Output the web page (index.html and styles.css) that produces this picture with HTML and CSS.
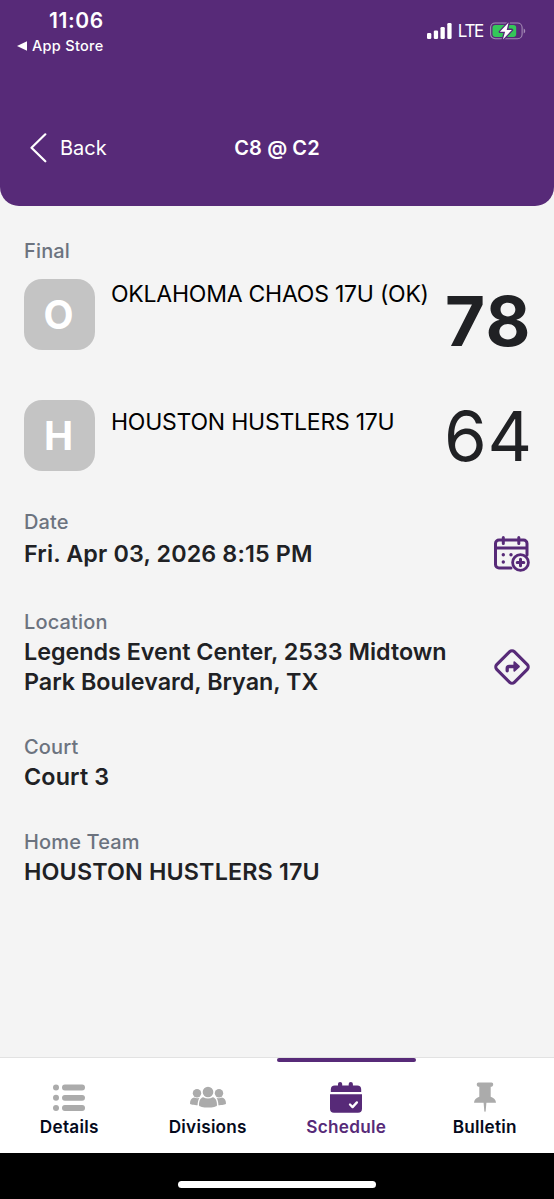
FILE: index.html
```html
<!DOCTYPE html>
<html lang="en">
<head>
<meta charset="utf-8">
<title>C8 @ C2</title>
<link rel="stylesheet" href="styles.css">
</head>
<body>
<header class="header">
  <div class="status">
    <div class="status-left">
      <div class="time">11:06</div>
      <div class="return-app">
        <svg width="10" height="10" viewBox="0 0 10 10"><path d="M0 5 10 .2V9.800Z" fill="#fff"/></svg>
        <span>App Store</span>
      </div>
    </div>
    <div class="status-right">
      <svg width="25" height="16" viewBox="0 0 25 16" fill="#fff"><rect x="0" y="10" width="4.300" height="6" rx="1.300"/><rect x="6.800" y="7.500" width="4.300" height="8.500" rx="1.300"/><rect x="13.500" y="4" width="4.300" height="12" rx="1.300"/><rect x="20.300" y="0" width="4.300" height="16" rx="1.300"/></svg>
      <span class="network">LTE</span>
      <svg class="battery" width="36" height="18" viewBox="0 0 36 18">
        <rect x=".6" y="1" width="31.500" height="15.800" rx="4.500" fill="none" stroke="#a58cb5" stroke-width="1.100"/>
        <path d="M33.700 6.500c2 .8 2 4.200 0 5Z" fill="#a58cb5"/>
        <rect x="2.500" y="2.900" width="23.700" height="12" rx="2.800" fill="#34c759"/>
        <path d="M18.600.6 9.900 9.800h5.200l-2.200 7.600 9-9.500h-5.200Z" fill="#fff" stroke="#572a78" stroke-width="2.600" paint-order="stroke" stroke-linejoin="round"/>
      </svg>
    </div>
  </div>
  <div class="navbar">
    <div class="back">
      <svg width="17" height="30" viewBox="0 0 17 30"><path d="M15.300 1.300 1.500 14.700 15.300 28.300" fill="none" stroke="#fff" stroke-width="2.200" stroke-linecap="round" stroke-linejoin="round"/></svg>
      <span>Back</span>
    </div>
    <h1 class="title">C8 @ C2</h1>
  </div>
</header>
<main class="content">
  <div class="label">Final</div>
  <div class="team">
    <div class="avatar">O</div>
    <div class="team-name name-first">OKLAHOMA CHAOS 17U (OK)</div>
    <div class="score winner">78</div>
  </div>
  <div class="team">
    <div class="avatar">H</div>
    <div class="team-name name-second">HOUSTON HUSTLERS 17U</div>
    <div class="score">64</div>
  </div>
  <section class="field date">
    <div>
      <div class="label">Date</div>
      <div class="value">Fri. Apr 03, 2026 8:15 PM</div>
    </div>
    <svg class="date-icon" width="36" height="36" viewBox="0 0 36 36" fill="none" stroke="#572a78" stroke-width="3" stroke-linecap="round">
      <path d="M17 32H5a3.500 3.500 0 0 1-3.500-3.500v-21A3.500 3.500 0 0 1 5 4h24.500A3.500 3.500 0 0 1 33 7.500V19M2 12h30.500M9.300 1.500v6M24.800 1.500v6"/>
      <circle cx="9.300" cy="18.700" r="1.700" fill="#572a78" stroke="none"/><circle cx="17" cy="18.700" r="1.700" fill="#572a78" stroke="none"/><circle cx="9.300" cy="26" r="1.700" fill="#572a78" stroke="none"/>
      <circle cx="26.500" cy="26.500" r="7.900" stroke-width="2.800" fill="#f4f4f4"/><path d="M26.500 23.200v6.600M23.200 26.500h6.600" stroke-width="3"/>
    </svg>
  </section>
  <section class="field location">
    <div>
      <div class="label">Location</div>
      <div class="value">Legends Event Center, 2533 Midtown<br>Park Boulevard, Bryan, TX</div>
    </div>
    <svg class="location-icon" width="36" height="36" viewBox="0 0 36 36" fill="none" stroke="#572a78">
      <path d="M20.300 2.700 33.300 15.700a3.300 3.300 0 0 1 0 4.600L20.300 33.300a3.300 3.300 0 0 1-4.600 0L2.700 20.300a3.300 3.300 0 0 1 0-4.600L15.700 2.700a3.300 3.300 0 0 1 4.600 0Z" stroke-width="3.100"/>
      <path d="M13.200 21.800v-2.300a2 2 0 0 1 2-2H21" stroke-width="3.300" stroke-linecap="round"/>
      <path d="M20.300 13.200v8.600l4.700-4.300Z" fill="#572a78" stroke-width="1.800" stroke-linejoin="round"/>
    </svg>
  </section>
  <section class="field court">
    <div>
      <div class="label">Court</div>
      <div class="value">Court 3</div>
    </div>
  </section>
  <section class="field">
    <div>
      <div class="label">Home Team</div>
      <div class="value">HOUSTON HUSTLERS 17U</div>
    </div>
  </section>
</main>
<nav class="tabs">
  <div class="tab">
    <svg width="32" height="34" viewBox="0 0 32 34" fill="#ababab"><circle cx="3" cy="6.500" r="3"/><circle cx="3" cy="16.800" r="3"/><circle cx="3" cy="27" r="3"/><rect x="9" y="3.600" width="23" height="5.800" rx="2.900"/><rect x="9" y="13.900" width="23" height="5.800" rx="2.900"/><rect x="9" y="24.100" width="23" height="5.800" rx="2.900"/></svg>
    <span>Details</span>
  </div>
  <div class="tab">
    <svg width="36" height="34" viewBox="0 0 36 34" fill="#ababab"><circle cx="18" cy="11" r="5.300"/><circle cx="7" cy="12.200" r="4.200"/><circle cx="29" cy="12.200" r="4.200"/><path d="M13.200 16.300c3 1.700 6.600 1.700 9.600 0 3 .6 4.200 3.700 4.200 8 0 1.400-4.500 2.300-9 2.300s-9-.9-9-2.300c0-4.300 1.200-7.400 4.200-8ZM4 16.500c1.600 1 4 1.100 5.500.2-1.200 2-1.900 4.500-1.900 7.600-3.200 0-7.600-.5-7.600-1.700 0-3.200 1.300-5.800 4-6.100ZM32 16.500c-1.600 1-4 1.100-5.500.2 1.200 2 1.900 4.500 1.900 7.600 3.200 0 7.600-.5 7.600-1.700 0-3.200-1.300-5.800-4-6.100Z"/></svg>
    <span>Divisions</span>
  </div>
  <div class="tab active">
    <svg width="32" height="34" viewBox="0 0 32 34"><path d="M.8 11V8.500a4 4 0 0 1 4-4H8V3a2.100 2.100 0 0 1 4.200 0v1.500h6.500V3a2.100 2.100 0 0 1 4.200 0v1.500h4.300a4 4 0 0 1 4 4V11ZM0 13.300h32v14.500a4 4 0 0 1-4 4H4a4 4 0 0 1-4-4Z" fill="#572a78"/><path d="m20 23.500 2.600 2.600 4.300-4.700" fill="none" stroke="#fff" stroke-width="2.300" stroke-linecap="round" stroke-linejoin="round"/></svg>
    <span>Schedule</span>
  </div>
  <div class="tab">
    <svg width="22" height="34" viewBox="0 0 22 34"><path d="M4.500 1.500h13c2.300 0 2.300 3.800 0 4.200h-.8v10c3 1 5.300 3 5.300 6.100H0c0-3.100 2.300-5.100 5.300-6.100v-10h-.8c-2.300-.4-2.300-4.200 0-4.200ZM9.600 21.800h2.800l-.7 8.200-.7 1.200-.7-1.200Z" fill="#ababab"/></svg>
    <span>Bulletin</span>
  </div>
</nav>
<footer class="home-area"><div class="home-bar"></div></footer>
</body>
</html>
```
FILE: styles.css
```css
* { box-sizing: border-box; }
body { margin: 0; width: 554px; height: 1199px; display: flex; flex-direction: column; background: #f4f4f4; font-family: Inter, "Liberation Sans", sans-serif; color: #202124; overflow: hidden; }
svg { display: block; flex: none; }
.header { height: 206px; flex: none; background: #572a78; color: #fff; border-radius: 0 0 19px 19px; }
.status { height: 123px; display: flex; justify-content: space-between; padding: 9px 28px 0 17px; }
.time { margin-left: 32px; font-size: 21px; line-height: 24px; font-weight: 600; letter-spacing: .6px; }
.return-app { display: flex; align-items: center; gap: 5px; margin-top: 3px; font-size: 14.5px; line-height: 20px; font-weight: 500; letter-spacing: .3px; }
.status-right { display: flex; align-items: center; height: 44px; gap: 6px; }
.network { font-size: 17px; line-height: 20px; letter-spacing: -1.3px; }
.battery { margin-left: 1px; }
.status-right { padding-right: 0; }
.navbar { display: grid; grid-template-columns: 1fr auto 1fr; align-items: center; height: 50px; padding: 0 30px; }
.back { display: flex; align-items: center; gap: 13px; font-size: 20px; line-height: 24px; }
.title { margin: 0; font-size: 20px; line-height: 24px; font-weight: 600; letter-spacing: .1px; }
.content { flex: 1; padding: 33px 24px 0; }
.label { font-size: 20px; line-height: 24px; font-weight: 500; letter-spacing: .15px; color: #6c737f; }
.value { font-size: 23.3px; line-height: 30px; font-weight: 600; white-space: nowrap; }
.team { display: flex; height: 71px; margin-top: 16px; }
.team + .team { margin-top: 50px; }
.avatar { width: 71px; height: 71px; flex: none; padding-right: 2px; border-radius: 18px; background: #c4c4c4; color: #fff; display: flex; align-items: center; justify-content: center; font-size: 39px; font-weight: 700; }
.team-name { flex: 1; margin-left: 16px; font-size: 23px; line-height: 28px; letter-spacing: -.24px; color: #000; white-space: nowrap; }
.name-first { padding-top: 1px; }
.name-second { padding-top: 8px; }
.score { margin-right: -3px; font-size: 69px; line-height: 73px; letter-spacing: .8px; }
.winner { font-weight: 700; padding-top: 6px; letter-spacing: 1.5px; margin-right: -2px; }
.field { display: flex; justify-content: space-between; }
.date { margin-top: 39px; height: 100px; }
.date .value { margin-top: 5px; letter-spacing: .14px; }
.date-icon { margin-top: 26px; }
.location { height: 125px; }
.location .value { margin-top: 3px; }
.location-icon { margin-top: 39px; }
.court { height: 95px; }
.court .value, .court + .field .value { margin-top: 3px; letter-spacing: .16px; }
.tabs { height: 96px; flex: none; display: grid; grid-template-columns: repeat(4, 1fr); background: #fff; border-top: 1px solid #e2e2e2; }
.tab { border-top: 4px solid transparent; display: flex; flex-direction: column; align-items: center; padding-top: 19px; color: #050a1c; font-size: 17.2px; line-height: 22px; font-weight: 600; letter-spacing: .25px; }
.tab span { margin-top: 1px; }
.tab.active { color: #572a78; position: relative; }
.tab.active::before { content: ""; position: absolute; top: -4px; left: 0; right: 0; height: 4px; border-radius: 2px; background: #572a78; }
.home-area { height: 46px; flex: none; background: #000; display: flex; justify-content: center; padding-top: 28px; }
.home-bar { width: 198px; height: 7px; border-radius: 4px; background: #fff; }
```
